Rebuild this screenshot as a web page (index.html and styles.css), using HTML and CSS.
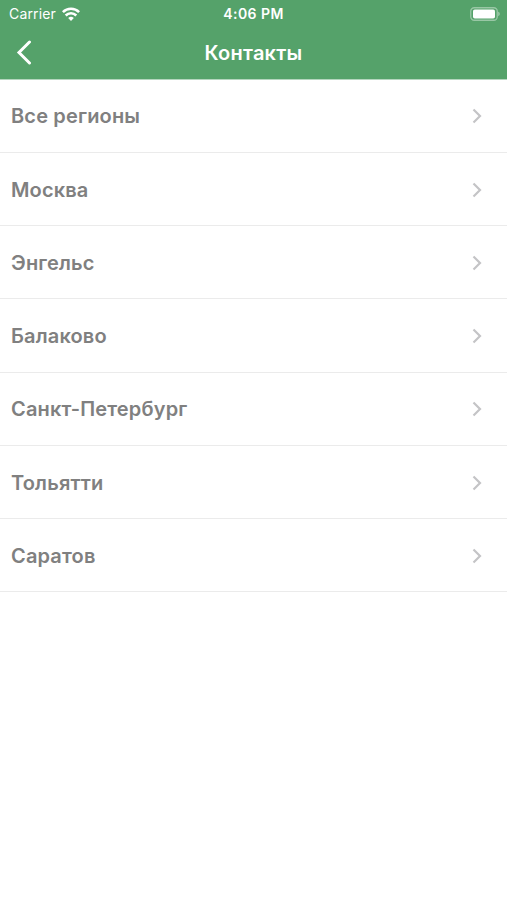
FILE: index.html
```html
<!DOCTYPE html>
<html lang="ru">
<head>
    <meta charset="UTF-8">
    <meta name="viewport" content="width=device-width, initial-scale=1.0">
    <title>Контакты</title>
    <link rel="stylesheet" href="styles.css">
</head>
<body>
    <header class="header">
        <div class="status-bar">
            <div class="carrier">
                <span class="carrier-name">Carrier</span>
                <svg class="wifi" width="18" height="14" viewBox="0 0 18 14" fill="none" stroke="#fff" stroke-width="2.6">
                    <path d="M0.9 5.1a11.5 11.5 0 0 1 16.2 0"/>
                    <path d="M3.7 8.5a7.5 7.5 0 0 1 10.6 0"/>
                    <path d="M9 14L6.2 11.1a4 4 0 0 1 5.6 0z" fill="#fff" stroke="none"/>
                </svg>
            </div>
            <span class="time">4:06 PM</span>
            <div class="battery-wrap">
                <svg class="battery" width="31" height="14" viewBox="0 0 31 14">
                    <rect x="0.75" y="0.75" width="26.5" height="12.5" rx="3.5" fill="none" stroke="#fff" stroke-width="1.3" stroke-opacity="0.4"/>
                    <rect x="3" y="2.5" width="22" height="9" rx="1.8" fill="#fff"/>
                    <path d="M28.3 4.8c1.8.6 1.8 3.8 0 4.4z" fill="#fff" fill-opacity="0.5"/>
                </svg>
            </div>
        </div>
        <div class="nav-bar">
            <svg class="back" width="16" height="26" viewBox="0 0 16 26" fill="none" stroke="#fff" stroke-width="3" stroke-linecap="round">
                <path d="M13.5 2L3 12.5 13.500 23"/>
            </svg>
            <h1 class="title">Контакты</h1>
        </div>
    </header>

    <ul class="regions" id="regions"></ul>

    <script>
        const regions = ['Все регионы', 'Москва', 'Энгельс', 'Балаково', 'Санкт-Петербург', 'Тольятти', 'Саратов'];

        const list = document.getElementById('regions');
        regions.forEach(name => {
            const item = document.createElement('li');
            item.className = 'region';
            item.innerHTML = `
                <span class="region-name">${name}</span>
                <svg class="arrow" width="10" height="16" viewBox="0 0 10 16" fill="none" stroke="#c4c4c6" stroke-width="2.2">
                    <path d="M1.5 1.5L8 8l-6.5 6.5"/>
                </svg>
            `;
            list.appendChild(item);
        });
    </script>
</body>
</html>
```
FILE: styles.css
```css
body {
    font-family: Inter, 'Liberation Sans', sans-serif;
    background: #fff;
    margin: 0;
}

.header {
    height: 78.7px;
    background: #55a26a;
    border-bottom: 1px solid #b4d6be;
    background-clip: padding-box;
    color: #fff;
}

.status-bar {
    display: grid;
    grid-template-columns: 1fr auto 1fr;
    align-items: center;
    height: 27px;
    padding: 0 6px 0 9px;
    font-size: 14px;
}

.carrier {
    display: flex;
    align-items: center;
    gap: 6px;
}

.carrier-name {
    letter-spacing: 0.15px;
}

.time {
    font-weight: 600;
    letter-spacing: 0.45px;
    margin-right: 3px;
}

.battery-wrap {
    display: flex;
    justify-content: flex-end;
}

.nav-bar {
    display: grid;
    grid-template-columns: 16px 1fr 16px;
    align-items: center;
    height: 52px;
    padding: 0 16px;
}

.title {
    margin: 0;
    font-size: 20px;
    font-weight: 600;
    letter-spacing: 0.25px;
    text-align: center;
}

.regions {
    margin: 0;
    padding: 0;
    list-style: none;
}

.region {
    display: flex;
    align-items: center;
    justify-content: space-between;
    box-sizing: border-box;
    height: 73.25px;
    padding: 1px 25px 0 11px;
    border-bottom: 1px solid #ebebeb;
}

.region-name {
    font-size: 20px;
    font-weight: 600;
    letter-spacing: 0.15px;
    color: #808080;
}
```
